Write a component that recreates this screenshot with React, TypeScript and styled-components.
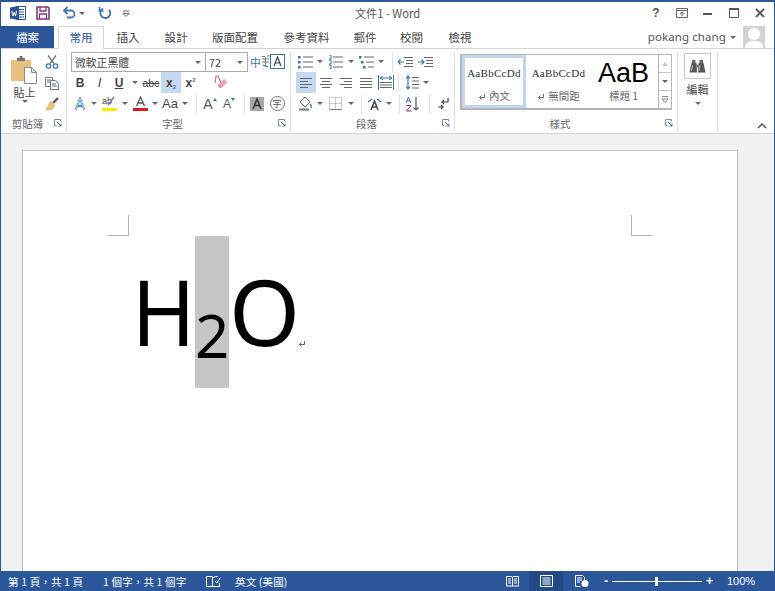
import { ReactNode } from "react";
import styled, { createGlobalStyle } from "styled-components";

const CJK = `"Noto Sans CJK TC", "Noto Sans", sans-serif`;
const BLUE = "#2b579a";

const Global = createGlobalStyle`
	html, body {
		margin: 0;
		width: 775px;
		height: 591px;
		overflow: hidden;
		background: #fff;
	}
	* {
		box-sizing: border-box;
	}
`;

const Win = styled.div`
	display: flex;
	flex-direction: column;
	width: 775px;
	height: 591px;
	border: 1px solid ${BLUE};
	border-top-width: 2px;
	border-bottom: none;
	font-family: ${CJK};
	color: #444;
	overflow: hidden;
`;

const TitleBar = styled.div`
	display: grid;
	grid-template-columns: 1fr auto 1fr;
	align-items: center;
	height: 24px;
	padding-bottom: 2px;
	flex: none;
`;

const Qat = styled.div`
	display: flex;
	align-items: center;
	padding-left: 9px;
`;

const Title = styled.div`
	font-size: 11.2px;
	color: #555;
`;

const WinBtns = styled.div`
	display: flex;
	justify-content: flex-end;
	padding-right: 1px;
`;

const WinBtn = styled.div`
	width: 26px;
	height: 20px;
	display: flex;
	align-items: center;
	justify-content: center;
	color: #555;
	font: bold 12px "Liberation Sans", sans-serif;
`;

const TabRow = styled.div`
	display: flex;
	height: 22px;
	flex: none;
	position: relative;
	z-index: 1;
`;

const FileTab = styled.div`
	width: 53px;
	background: ${BLUE};
	color: #fff;
	font-size: 11.5px;
	display: flex;
	align-items: center;
	justify-content: center;
	padding-bottom: 1px;
	margin-right: 4px;
`;

const Tab = styled.div<{ $w: number; $active?: boolean }>`
	width: ${(p) => p.$w}px;
	display: flex;
	align-items: center;
	justify-content: center;
	padding-bottom: 2px;
	font-size: 11.5px;
	color: ${(p) => (p.$active ? BLUE : "#444")};
	background: ${(p) => (p.$active ? "#fff" : "transparent")};
	border: 1px solid ${(p) => (p.$active ? "#d4d4d4" : "transparent")};
	border-bottom: none;
	height: ${(p) => (p.$active ? "23px" : "22px")};
`;

const User = styled.div`
	margin-left: auto;
	display: flex;
	align-items: center;
	font-size: 11.5px;
	letter-spacing: 0.1px;
	color: #555;
	padding-right: 9px;
	font-family: "Noto Sans", sans-serif;
`;

const UserName = styled.span`
	padding-bottom: 2px;
`;

const Avatar = styled.div`
	width: 22px;
	height: 22px;
	margin-left: 3px;
	background: #d3d3d3;
	overflow: hidden;
`;

const Ribbon = styled.div`
	display: flex;
	height: 86px;
	flex: none;
	background: #fff;
	border-top: 1px solid #d4d4d4;
	border-bottom: 1px solid #d4d4d4;
`;

const Group = styled.div<{ $w: number }>`
	width: ${(p) => p.$w}px;
	flex: none;
	display: flex;
	flex-direction: column;
	margin: 2px 0 1px;
	border-right: 1px solid #e1e1e1;
`;

const GroupBody = styled.div<{ $pad?: number }>`
	flex: 1;
	padding-left: ${(p) => p.$pad ?? 0}px;
	min-height: 0;
`;

const GroupLabel = styled.div`
	display: grid;
	grid-template-columns: 1fr 12px;
	align-items: center;
	height: 18px;
	font-size: 10.5px;
	color: #666;
	text-align: center;
`;

const Row = styled.div`
	display: flex;
	align-items: center;
	height: 21px;
`;

const Tool = styled.div<{ $w?: number; $active?: boolean }>`
	width: ${(p) => p.$w ?? 20}px;
	height: 21px;
	flex: none;
	display: flex;
	align-items: center;
	justify-content: center;
	background: ${(p) => (p.$active ? "#c5daf2" : "transparent")};
	font-family: "Liberation Sans", sans-serif;
	color: #444;
`;

const Glyph = styled.span<{ $b?: boolean; $i?: boolean; $u?: boolean; $s?: boolean; $size?: number }>`
	font-size: ${(p) => p.$size ?? 12}px;
	font-weight: ${(p) => (p.$b ? 700 : 400)};
	font-style: ${(p) => (p.$i ? "italic" : "normal")};
	text-decoration: ${(p) => (p.$u ? "underline" : p.$s ? "line-through" : "none")};
`;

const Phonetic = styled.span`
	font: 11px ${CJK};
	color: #3f72b0;
`;

const ScriptNum = styled.span<{ $up?: boolean }>`
	font-size: 6px;
	line-height: 0;
	color: #3f72b0;
	font-weight: 700;
	vertical-align: ${(p) => (p.$up ? "5px" : "-2px")};
`;

const SizeGlyph = styled.span<{ $up?: boolean; $size: number }>`
	display: flex;
	align-items: flex-start;
	font-size: ${(p) => p.$size}px;
	line-height: 14px;
	color: #555;
	&::after {
		content: "";
		margin-top: 1px;
		border-left: 2.5px solid transparent;
		border-right: 2.5px solid transparent;
		${(p) => (p.$up ? "border-bottom" : "border-top")}: 3px solid #3f72b0;
	}
`;

const Sep = styled.div<{ $l: number; $r: number }>`
	width: 1px;
	height: 20px;
	flex: none;
	background: #e1e1e1;
	margin: 0 ${(p) => p.$r}px 0 ${(p) => p.$l}px;
`;

const Spacer = styled.div<{ $w: number }>`
	width: ${(p) => p.$w}px;
	flex: none;
`;

const CaretMark = styled.span<{ $w?: number; $color?: string }>`
	width: ${(p) => p.$w ?? 10}px;
	flex: none;
	display: flex;
	align-items: center;
	justify-content: center;
	&::after {
		content: "";
		border-left: 3px solid transparent;
		border-right: 3px solid transparent;
		border-top: 3px solid ${(p) => p.$color ?? "#666"};
	}
`;

const Combo = styled.div<{ $w: number }>`
	width: ${(p) => p.$w}px;
	height: 20px;
	margin: 1px -1px 0 0;
	flex: none;
	display: flex;
	align-items: center;
	justify-content: space-between;
	border: 1px solid #ababab;
	padding: 0 0 0 3px;
	font-size: 10.8px;
	color: #444;
	background: #fff;
	font-family: ${CJK};
`;

const ClipLayout = styled.div`
	display: flex;
	height: 100%;
`;

const PasteCol = styled.div`
	width: 41px;
	display: flex;
	flex-direction: column;
	align-items: center;
	padding: 5px 0 0 6px;
	font-size: 11px;
	line-height: 14px;
	color: #444;
	span {
		margin-top: 1px;
	}
`;

const ClipTools = styled.div`
	display: flex;
	flex-direction: column;
`;

const Gallery = styled.div`
	display: flex;
	width: 212px;
	height: 56px;
	margin: 3px 0 0 5px;
	border: 1px solid #b5b5b5;
	border-width: 1px 1px 2px 2px;
	background: #fff;
`;

const StyleItem = styled.div<{ $w: number; $active?: boolean }>`
	width: ${(p) => p.$w}px;
	display: flex;
	flex-direction: column;
	align-items: center;
	border: 3px solid ${(p) => (p.$active ? "#c3d6f0" : "transparent")};
`;

const Sample = styled.div`
	height: 30px;
	display: flex;
	align-items: center;
	font: 11px "Liberation Serif", serif;
	letter-spacing: 0.3px;
	color: #333;
`;

const BigSample = styled(Sample)`
	font: 27px "Liberation Sans", sans-serif;
	letter-spacing: 0;
	color: #000;
	line-height: 28px;
`;

const StyleName = styled.div`
	font-size: 10.5px;
	line-height: 16px;
	color: #666;
	white-space: nowrap;
`;

const Scroller = styled.div`
	width: 13px;
	display: flex;
	flex-direction: column;
	border-left: 1px solid #b5b5b5;
	margin-left: auto;
`;

const ScrollBtn = styled.div`
	flex: 1;
	display: flex;
	align-items: center;
	justify-content: center;
	border-bottom: 1px solid #c6c6c6;
	&:last-child {
		border-bottom: none;
	}
`;

const EditCol = styled.div`
	display: flex;
	flex-direction: column;
	align-items: center;
	font-size: 11px;
	line-height: 16px;
	padding-top: 2px;
`;

const EditBtn = styled.div`
	width: 27px;
	height: 26px;
	border: 1px solid #c6c6c6;
	display: flex;
	align-items: center;
	justify-content: center;
	margin-bottom: 2px;
`;

const EditCaret = styled(CaretMark)`
	margin-top: 5px;
`;

const Collapse = styled.div`
	flex: 1;
	display: flex;
	align-items: flex-end;
	justify-content: flex-end;
	padding: 0 7px 3px 0;
`;

const Canvas = styled.div`
	flex: 1;
	min-height: 0;
	background: #f1f1f1;
	padding: 16px 0 0 21px;
	overflow: hidden;
`;

const Page = styled.div`
	width: 716px;
	height: 600px;
	background: #fff;
	border: 1px solid #c6c6c6;
	padding-top: 64px;
`;

const Marks = styled.div`
	display: flex;
	justify-content: space-between;
	padding: 0 85px;
`;

const Mark = styled.div<{ $right?: boolean }>`
	width: 21px;
	height: 21px;
	border-bottom: 1px solid #b5b5b5;
	${(p) => (p.$right ? "border-left" : "border-right")}: 1px solid #b5b5b5;
`;

const DocLine = styled.div`
	display: flex;
	align-items: flex-start;
	height: 152px;
	margin: 0 0 0 105px;
	font-family: "Noto Sans", sans-serif;
	color: #000;
	line-height: 1;
`;

const Big = styled.span`
	font-size: 91px;
	padding-top: 30px;
	letter-spacing: -0.5px;
`;

const BigH = styled(Big)`
	transform: scaleX(0.945);
	transform-origin: right center;
`;

const Selected = styled.span`
	width: 34px;
	height: 152px;
	flex: none;
	background: #c6c6c6;
	font-size: 60px;
	padding-top: 69px;
	text-align: center;
`;

const Pilcrow = styled.span`
	align-self: flex-start;
	margin: 98px 0 0 -2px;
`;

const StatusBar = styled.div`
	display: flex;
	align-items: center;
	height: 20px;
	flex: none;
	background: ${BLUE};
	color: #fff;
	font-size: 10.5px;
	white-space: nowrap;
`;

const StatusText = styled.span<{ $w: number; $pad?: number }>`
	width: ${(p) => p.$w}px;
	padding-left: ${(p) => p.$pad ?? 0}px;
	flex: none;
	letter-spacing: 0.15px;
`;

const ViewBtn = styled.div<{ $active?: boolean; $w: number }>`
	width: ${(p) => p.$w}px;
	height: 20px;
	flex: none;
	display: flex;
	align-items: center;
	justify-content: center;
	background: ${(p) => (p.$active ? "#234a85" : "transparent")};
`;

const Zoom = styled.div`
	display: flex;
	align-items: center;
	width: 109px;
	margin-left: 4px;
	font: bold 12px "Liberation Sans", sans-serif;
`;

const Track = styled.div`
	flex: 1;
	height: 1px;
	margin: 0 4px;
	background: #fff;
	display: flex;
	align-items: center;
	justify-content: center;
`;

const Thumb = styled.div`
	width: 3px;
	height: 9px;
	background: #fff;
	flex: none;
`;

const ZoomPct = styled.div`
	margin-left: 14px;
	font: 11px "Liberation Sans", sans-serif;
`;

const Svg = ({ w = 16, h = 16, children }: { w?: number; h?: number; children: ReactNode }) => (
	<svg width={w} height={h} viewBox={`0 0 ${w} ${h}`} fill="none">
		{children}
	</svg>
);

const Launcher = () => (
	<Svg w={8} h={8}>
		<path d="M.5.5h6v2M.5.5v6h2" stroke="#888" />
		<path d="M3 3l4 4M4.500 7H7V4.500" stroke="#3f6f9f" />
	</Svg>
);

const WordIcon = () => (
	<Svg w={16} h={14}>
		<path d="M6 .5h9.500v13H6z" fill="#fff" stroke={BLUE} />
		<path d="M9 3.500h5M9 6h5M9 8.500h5M9 11h5" stroke={BLUE} />
		<path d="M0 1.500l9-1.500v14l-9-1.500z" fill={BLUE} />
		<path d="M2 5l1 5 1.300-4 1.200 4 1-5" stroke="#fff" />
	</Svg>
);

const SaveIcon = () => (
	<Svg w={14} h={14}>
		<path d="M1 1h11l1 1v11H1z" stroke="#80397b" strokeWidth="1.600" />
		<path d="M4 1v4h6V1M3.500 13V8h7v5" stroke="#80397b" strokeWidth="1.300" />
	</Svg>
);

const UndoIcon = () => (
	<Svg w={14} h={14}>
		<path d="M2 4.500h7a3.500 3.500 0 010 7H5" stroke="#3f72b0" strokeWidth="1.800" />
		<path d="M5.500 1L2 4.500 5.500 8" stroke="#3f72b0" strokeWidth="1.800" />
	</Svg>
);

const RedoIcon = () => (
	<Svg w={14} h={14}>
		<path d="M5 2.600a5 5 0 106 1" stroke="#3f72b0" strokeWidth="1.800" />
		<path d="M1.500 1v4h4" stroke="#3f72b0" strokeWidth="1.600" />
	</Svg>
);

const PasteIcon = () => (
	<Svg w={27} h={28}>
		<rect x="0" y="4" width="20" height="21" fill="#e8c07d" />
		<path d="M6 4V2h2.500V0h3v2H14v3H6z" fill="#777" />
		<path d="M13.500 11.500h7l5 5v11h-12z" fill="#fff" stroke="#8a8a8a" />
		<path d="M20.500 11.500v5h5" stroke="#8a8a8a" />
	</Svg>
);

const ScissorsIcon = () => (
	<Svg w={14} h={14}>
		<path d="M3 .5l6 8M11 .5l-6 8" stroke="#777" strokeWidth="1.300" />
		<circle cx="3.500" cy="11" r="2.200" stroke="#3f72b0" strokeWidth="1.300" />
		<circle cx="10.500" cy="11" r="2.200" stroke="#3f72b0" strokeWidth="1.300" />
	</Svg>
);

const CopyIcon = () => (
	<Svg w={14} h={14}>
		<path d="M.5 1.500h7v9h-7z" fill="#fff" stroke="#777" />
		<path d="M5.500 4.500h5l3 3v6h-8z" fill="#fff" stroke="#777" />
		<path d="M2 4h4M2 6h3M7 8h4M7 10h5" stroke="#3f72b0" />
	</Svg>
);

const BrushIcon = () => (
	<Svg w={14} h={14}>
		<path d="M8 6L13 1" stroke="#555" strokeWidth="2.400" />
		<path d="M5.500 3.500l5 5-4 5H0z" fill="#e8c07d" />
	</Svg>
);

const PhoneticIcon = () => (
	<Svg w={9} h={14}>
		<path d="M1 1.500h3M6 1h3" stroke="#777" />
		<path d="M1 4h7M1 7h7M4.500 2v10" stroke="#777" />
		<path d="M1.500 10l6 2" stroke="#3f72b0" />
	</Svg>
);

const BoxedA = () => (
	<Svg w={15} h={15}>
		<rect x=".5" y=".5" width="14" height="14" stroke="#3f72b0" />
		<path d="M4 12L7.500 3 11 12M5.200 9h4.600" stroke="#444" strokeWidth="1.200" />
	</Svg>
);

const EraserIcon = () => (
	<Svg w={15} h={15}>
		<path d="M2 8L3 1h2l3 7" stroke="#b8778f" strokeWidth="1.200" />
		<path d="M5 10l6-6 3.500 3-6 6H7z" fill="#ef9db4" />
		<path d="M5 10l2.500 3" stroke="#d06480" />
	</Svg>
);

const TextEffectA = () => (
	<Svg w={14} h={14}>
		<path d="M2.500 13L7 1.500 11.500 13M4.400 9h5.200" stroke="#4b8ac9" strokeWidth="2" />
		<path d="M2.500 13L7 1.500 11.500 13" stroke="#d7e6f6" strokeWidth=".7" />
	</Svg>
);

const HighlightIcon = () => (
	<Svg w={15} h={15}>
		<text x="0" y="8" fontSize="9" fill="#444" fontFamily="Liberation Sans">ab</text>
		<path d="M6 9l6-8" stroke="#777" strokeWidth="1.300" />
		<rect y="12" width="15" height="3" fill="#ffeb00" />
	</Svg>
);

const FontColorIcon = () => (
	<Svg w={15} h={15}>
		<path d="M3.500 10L7.500 1l4 9M5 7h5" stroke="#555" strokeWidth="1.300" />
		<rect y="12" width="15" height="3" fill="#e0171c" />
	</Svg>
);

const GreyA = () => (
	<Svg w={14} h={14}>
		<rect width="14" height="14" fill="#a8a8a8" />
		<path d="M3 12L7 2l4 10M4.500 8.500h5" stroke="#333" strokeWidth="1.500" />
	</Svg>
);

const CircleChar = styled.span`
	width: 15px;
	height: 15px;
	border: 1px solid #777;
	border-radius: 50%;
	font: 9px/13px ${CJK};
	text-align: center;
	color: #555;
`;

const Lines = ({ rows }: { rows: [number, number][] }) => (
	<Svg w={14} h={12}>
		{rows.map(([x1, x2], i) => (
			<path key={i} d={`M${x1} ${1.5 + i * 3}H${x2}`} stroke="#666" />
		))}
	</Svg>
);

const BulletIcon = ({ numbered, tiered }: { numbered?: boolean; tiered?: boolean }) => (
	<Svg w={15} h={14}>
		{[2, 7, 12].map((y, i) => (
			<g key={y}>
				{numbered ? (
					<path d={`M1 ${y - 2}h2v4H1`} stroke="#3f72b0" />
				) : (
					<rect x={tiered ? i * 2 : 0} y={y - 1} width="2.500" height="2.500" fill="#3f72b0" />
				)}
				<path d={`M${5 + (tiered ? i * 2 : 0)} ${y}H15`} stroke="#666" />
			</g>
		))}
	</Svg>
);

const IndentIcon = ({ flip }: { flip?: boolean }) => (
	<Svg w={15} h={12}>
		<path d="M6 1.500h9M8 4.500h7M8 7.500h7M6 10.500h9" stroke="#666" />
		{flip ? (
			<path d="M0 6h6M3.500 3.500L6 6 3.500 8.500" stroke="#3f72b0" strokeWidth="1.200" />
		) : (
			<path d="M6 6H0M2.500 3.500L0 6l2.500 2.500" stroke="#3f72b0" strokeWidth="1.200" />
		)}
	</Svg>
);

const DistributedIcon = () => (
	<Svg w={16} h={15}>
		<path d="M.5 0v15M15.500 0v15" stroke="#3f72b0" />
		<path d="M2 3h12M5 1l-3 2 3 2M11 1l3 2-3 2" stroke="#3f72b0" />
		<path d="M2 7.500h12M2 10h12M2 12.500h12" stroke="#666" />
	</Svg>
);

const LineSpacingIcon = () => (
	<Svg w={14} h={15}>
		<path d="M3 1v13M1 3.500L3 1l2 2.500M1 11.500L3 14l2-2.500" stroke="#3f72b0" strokeWidth="1.200" />
		<path d="M7 2.500h7M7 6h7M7 9.500h7M7 13h7" stroke="#666" />
	</Svg>
);

const ShadingIcon = () => (
	<Svg w={15} h={15}>
		<path d="M7 1l5 5-5 5-5-5z" fill="#fff" stroke="#666" />
		<path d="M1 13.500h10" stroke="#777" strokeWidth="2" />
		<path d="M12 8c1.500 2 2 3 1 4" stroke="#3f72b0" strokeWidth="1.300" />
	</Svg>
);

const BordersIcon = () => (
	<Svg w={13} h={13}>
		<path d="M.5.5h12v12H.5zM6.500.5v12M.5 6.500h12" stroke="#999" strokeDasharray="1 1" />
		<path d="M.5 12.500h12" stroke="#777" />
	</Svg>
);

const DirectionIcon = () => (
	<Svg w={15} h={14}>
		<path d="M4 13L7.500 4 11 13M5.200 10h4.600" stroke="#444" strokeWidth="1.500" />
		<path d="M1 5l4-3M14 5l-4-3" stroke="#3f72b0" strokeWidth="1.300" />
	</Svg>
);

const SortIcon = () => (
	<Svg w={15} h={16}>
		<path d="M0 7l2.500-6L5 7M1 5h3" stroke="#3f72b0" />
		<path d="M.5 9.500h4.500l-4.500 5.500h5" stroke="#80397b" />
		<path d="M10 1v13M7.500 11.500L10 14l2.500-2.500" stroke="#555" strokeWidth="1.200" />
	</Svg>
);

const PilcrowArrow = () => (
	<Svg w={12} h={14}>
		<path d="M11 1v4H5M7 3L5 5l2 2" stroke="#444" strokeWidth="1.200" />
		<path d="M1 10h5M4 8l2 2-2 2" stroke="#444" strokeWidth="1.200" />
	</Svg>
);

const ParaMark = () => (
	<Svg w={8} h={8}>
		<path d="M6.500 1v3.500H1.500M3.500 2.500l-2 2 2 2" stroke="#666" />
	</Svg>
);

const SmallMark = styled.span`
	display: inline-block;
	margin-right: 3px;
	vertical-align: -1px;
`;

const Binoculars = () => (
	<Svg w={17} h={14}>
		<path d="M3 1h3.500v3H3zM10.500 1H14v3h-3.500z" fill="#666" />
		<path d="M2.500 4h5l.5 9.500H.5zM9.500 4h5l2 9.500H9z" fill="#555" />
		<path d="M7.500 5.500h2v3h-2z" fill="#777" />
		<path d="M3.500 6l-1 6M11 6l-1 6" stroke="#bbb" />
	</Svg>
);

const Person = () => (
	<svg width="22" height="22" viewBox="0 0 22 22">
		<circle cx="11" cy="8" r="6" fill="#fff" />
		<path d="M2 22c0-6 4-7 9-7s9 1 9 7z" fill="#fff" />
	</svg>
);

const tabs: [string, number][] = [
	["插入", 48],
	["設計", 48],
	["版面配置", 70],
	["參考資料", 73],
	["郵件", 44],
	["校閱", 49],
	["檢視", 48],
];

export default function App() {
	return (
		<>
			<Global />
			<Win>
				<TitleBar>
					<Qat>
						<WordIcon />
						<Spacer $w={10} />
						<SaveIcon />
						<Spacer $w={12} />
						<UndoIcon />
						<CaretMark $w={12} />
						<Spacer $w={10} />
						<RedoIcon />
						<Spacer $w={10} />
						<Svg w={8} h={8}>
							<path d="M1 2h6M1 4.500l3 3 3-3z" stroke="#666" />
						</Svg>
					</Qat>
					<Title>文件1 - Word</Title>
					<WinBtns>
						<WinBtn>?</WinBtn>
						<WinBtn>
							<Svg w={12} h={10}>
								<path d="M.5.5h11v9H.5zM.5 2.500h11M6 8V4M4 6l2-2 2 2" stroke="#666" />
							</Svg>
						</WinBtn>
						<WinBtn>
							<Svg w={10} h={10}>
								<path d="M0 6h9" stroke="#555" strokeWidth="2" />
							</Svg>
						</WinBtn>
						<WinBtn>
							<Svg w={10} h={10}>
								<path d="M.5 1.500h9v8h-9z" stroke="#555" />
								<path d="M0 1h10" stroke="#555" strokeWidth="2" />
							</Svg>
						</WinBtn>
						<WinBtn>
							<Svg w={10} h={10}>
								<path d="M1 1l8 8M9 1L1 9" stroke="#555" strokeWidth="1.800" />
							</Svg>
						</WinBtn>
					</WinBtns>
				</TitleBar>

				<TabRow>
					<FileTab>檔案</FileTab>
					<Tab $w={46} $active>常用</Tab>
					{tabs.map(([name, w]) => (
						<Tab key={name} $w={w}>{name}</Tab>
					))}
					<User>
						<UserName>pokang chang</UserName>
						<CaretMark $w={14} />
						<Avatar>
							<Person />
						</Avatar>
					</User>
				</TabRow>

				<Ribbon>
					<Group $w={66}>
						<GroupBody>
							<ClipLayout>
								<PasteCol>
									<PasteIcon />
									<span>貼上</span>
									<CaretMark />
								</PasteCol>
								<ClipTools>
									<Tool><ScissorsIcon /></Tool>
									<Tool><CopyIcon /></Tool>
									<Tool><BrushIcon /></Tool>
								</ClipTools>
							</ClipLayout>
						</GroupBody>
						<GroupLabel>
							<span>剪貼簿</span>
							<Launcher />
						</GroupLabel>
					</Group>

					<Group $w={224}>
						<GroupBody $pad={3}>
							<Row>
								<Spacer $w={1} />
								<Combo $w={135}>
									微軟正黑體
									<CaretMark $w={14} />
								</Combo>
								<Combo $w={43}>
									72
									<CaretMark $w={14} />
								</Combo>
								<Spacer $w={3} />
								<Tool $w={11}><Phonetic>中</Phonetic></Tool>
								<PhoneticIcon />
								<BoxedA />
							</Row>
							<Row>
								<Tool><Glyph $b>B</Glyph></Tool>
								<Tool $w={19}><Glyph $i $size={13}>I</Glyph></Tool>
								<Tool><Glyph $b $u>U</Glyph></Tool>
								<CaretMark $w={12} />
								<Tool><Glyph $s $size={10.5}>abc</Glyph></Tool>
								<Tool $active><Glyph $b>x<ScriptNum>2</ScriptNum></Glyph></Tool>
								<Tool $w={19}><Glyph $b>x<ScriptNum $up>2</ScriptNum></Glyph></Tool>
								<Spacer $w={10} />
								<Tool><EraserIcon /></Tool>
							</Row>
							<Row>
								<Tool $w={19}><TextEffectA /></Tool>
								<CaretMark />
								<Tool $w={21}><HighlightIcon /></Tool>
								<CaretMark />
								<Tool><FontColorIcon /></Tool>
								<CaretMark />
								<Tool><Glyph $size={13}>Aa</Glyph></Tool>
								<CaretMark />
								<Sep $l={6} $r={3} />
								<Tool><SizeGlyph $up $size={14}>A</SizeGlyph></Tool>
								<Tool $w={18}><SizeGlyph $size={12}>A</SizeGlyph></Tool>
								<Sep $l={6} $r={2} />
								<Tool><GreyA /></Tool>
								<Tool><CircleChar>字</CircleChar></Tool>
							</Row>
						</GroupBody>
						<GroupLabel>
							<span>字型</span>
							<Launcher />
						</GroupLabel>
					</Group>

					<Group $w={164}>
						<GroupBody $pad={5}>
							<Row>
								<Tool $w={19}><BulletIcon /></Tool>
								<CaretMark />
								<Spacer $w={1} />
								<Tool $w={19}><BulletIcon numbered /></Tool>
								<CaretMark $w={11} />
								<Spacer $w={1} />
								<Tool $w={19}><BulletIcon tiered /></Tool>
								<CaretMark />
								<Sep $l={6} $r={3} />
								<Tool $w={19}><IndentIcon /></Tool>
								<Spacer $w={1} />
								<Tool $w={19}><IndentIcon flip /></Tool>
							</Row>
							<Row>
								<Tool $active><Lines rows={[[1, 13], [1, 9], [1, 13], [1, 9]]} /></Tool>
								<Tool><Lines rows={[[1, 13], [3, 11], [1, 13], [3, 11]]} /></Tool>
								<Tool><Lines rows={[[1, 13], [5, 13], [1, 13], [5, 13]]} /></Tool>
								<Tool><Lines rows={[[1, 13], [1, 13], [1, 13], [1, 13]]} /></Tool>
								<Tool $w={19}><DistributedIcon /></Tool>
								<Sep $l={3} $r={3} />
								<Tool><LineSpacingIcon /></Tool>
								<CaretMark $w={8} />
							</Row>
							<Row>
								<Tool $w={19}><ShadingIcon /></Tool>
								<CaretMark />
								<Spacer $w={1} />
								<Tool $w={19}><BordersIcon /></Tool>
								<CaretMark $w={11} />
								<Sep $l={5} $r={3} />
								<Tool $w={19}><DirectionIcon /></Tool>
								<CaretMark />
								<Sep $l={5} $r={3} />
								<Tool><SortIcon /></Tool>
								<Sep $l={6} $r={3} />
								<Tool><PilcrowArrow /></Tool>
							</Row>
						</GroupBody>
						<GroupLabel>
							<span>段落</span>
							<Launcher />
						</GroupLabel>
					</Group>

					<Group $w={223}>
						<GroupBody>
							<Gallery>
								<StyleItem $w={64} $active>
									<Sample>AaBbCcDd</Sample>
									<StyleName><SmallMark><ParaMark /></SmallMark>內文</StyleName>
								</StyleItem>
								<StyleItem $w={65}>
									<Sample>AaBbCcDd</Sample>
									<StyleName><SmallMark><ParaMark /></SmallMark>無間距</StyleName>
								</StyleItem>
								<StyleItem $w={65}>
									<BigSample>AaB</BigSample>
									<StyleName>標題 1</StyleName>
								</StyleItem>
								<Scroller>
									<ScrollBtn><Svg w={6} h={4}><path d="M3 0l3 4H0z" fill="#c6c6c6" /></Svg></ScrollBtn>
									<ScrollBtn><CaretMark $w={6} /></ScrollBtn>
									<ScrollBtn>
										<Svg w={6} h={7}>
											<path d="M0 .5h6M3 6.500L0 3h6z" stroke="#666" strokeWidth=".8" />
										</Svg>
									</ScrollBtn>
								</Scroller>
							</Gallery>
						</GroupBody>
						<GroupLabel>
							<span>樣式</span>
							<Launcher />
						</GroupLabel>
					</Group>

					<Group $w={40}>
						<GroupBody>
							<EditCol>
								<EditBtn><Binoculars /></EditBtn>
								編輯
								<EditCaret />
							</EditCol>
						</GroupBody>
					</Group>

					<Collapse>
						<Svg w={10} h={8}>
							<path d="M1 6l4-4 4 4" stroke="#555" strokeWidth="1.500" />
						</Svg>
					</Collapse>
				</Ribbon>

				<Canvas>
					<Page>
						<Marks>
							<Mark />
							<Mark $right />
						</Marks>
						<DocLine>
							<BigH>H</BigH>
							<Selected>2</Selected>
							<Big>O</Big>
							<Pilcrow><ParaMark /></Pilcrow>
						</DocLine>
					</Page>
				</Canvas>

				<StatusBar>
					<StatusText $w={102} $pad={7}>第 1 頁，共 1 頁</StatusText>
					<StatusText $w={103}>1 個字，共 1 個字</StatusText>
					<Svg w={15} h={12}>
						<path d="M.5 1.500h6v10h-6zM6.500 3l3-1.500h2M6.500 11.500h7V8" stroke="#fff" />
						<path d="M9 6l2 2 3-5" stroke="#fff" />
					</Svg>
					<Spacer $w={14} />
					<StatusText $w={261}>英文 (美國)</StatusText>
					<ViewBtn $w={33}>
						<Svg w={13} h={12}>
							<path d="M.5 1.500h5.500l.5 1 .5-1h5.500v9.500h-12zM6.500 2.500V11" stroke="#fff" />
							<path d="M2 4h3M2 6h3M2 8h3M8 4h3M8 6h3M8 8h3" stroke="#fff" />
						</Svg>
					</ViewBtn>
					<ViewBtn $w={34} $active>
						<Svg w={13} h={12}>
							<path d="M.5.5h12v11H.5z" stroke="#fff" />
							<path d="M2.500 3h8M2.500 5h8M2.500 7h8M2.500 9h8" stroke="#fff" />
						</Svg>
					</ViewBtn>
					<ViewBtn $w={37}>
						<Svg w={14} h={12}>
							<path d="M.5.500h7l2 2v3M.5.5v11h5" stroke="#fff" />
							<path d="M2 3h5M2 5h5M2 7h3" stroke="#fff" />
							<circle cx="10" cy="8.500" r="3.500" fill="#fff" />
						</Svg>
					</ViewBtn>
					<Zoom>
						-
						<Track><Thumb /></Track>
						+
					</Zoom>
					<ZoomPct>100%</ZoomPct>
				</StatusBar>
			</Win>
		</>
	);
}
